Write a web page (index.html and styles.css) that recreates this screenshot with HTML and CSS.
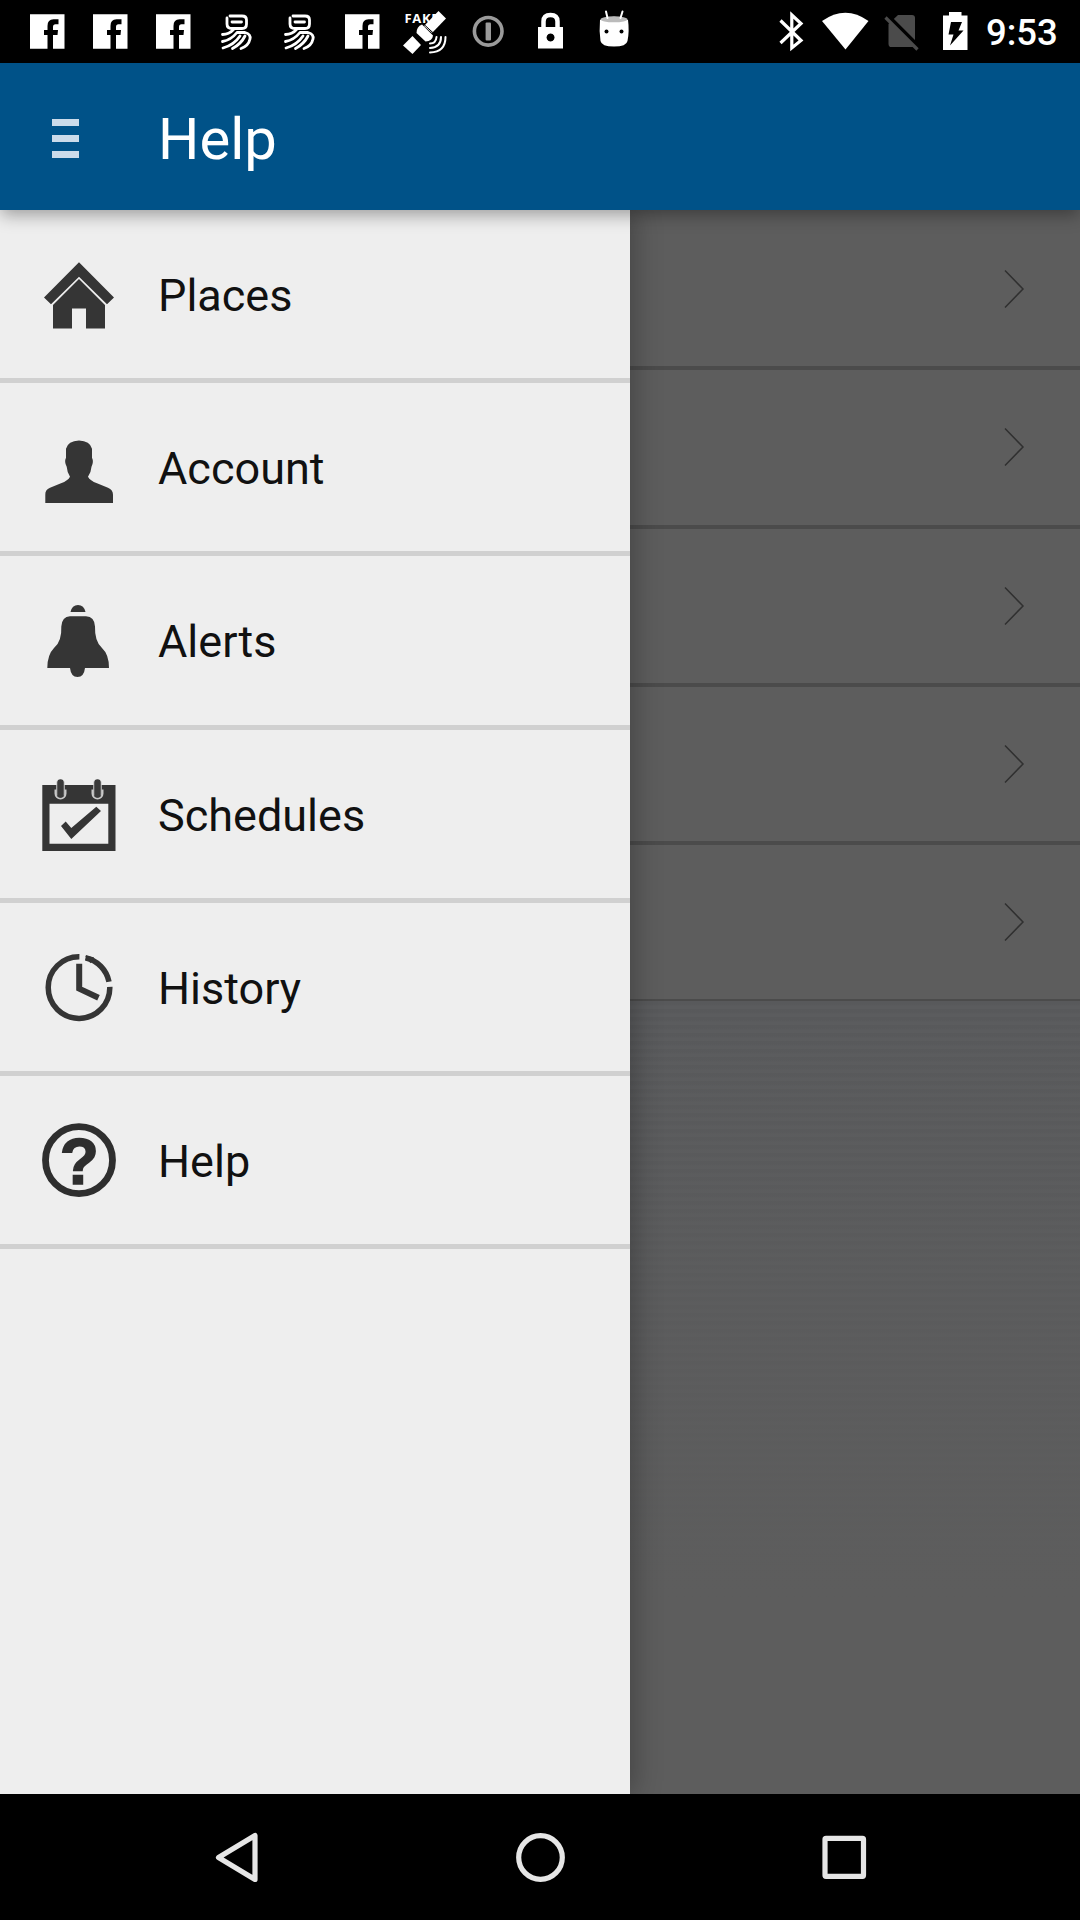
FILE: index.html
```html
<!DOCTYPE html>
<html lang="en">
<head>
<meta charset="utf-8">
<title>Help</title>
<link rel="stylesheet" href="styles.css">
</head>
<body>
<svg class="defs" width="0" height="0">
  <symbol id="fb" viewBox="0 0 63 63"><path class="w" d="M14 14.3H48.5V48.7H37V35H41.5L42 30H37V27Q37 24.300 39.500 24.300H42.500V19.300H37.500Q31.500 19.300 31.500 26V30H28V35H31.500V48.700H14Z"/></symbol>
  <symbol id="yi" viewBox="0 0 63 63"><g class="ws"><path d="M25 16H37Q41.500 16 41.500 20V24Q41.500 28.500 37 28.500H27Q22 28.500 22 24V18"/><path d="M27 22H36.500"/><path d="M17.500 34.500Q24 34.500 28.500 29.500M17.500 41.500Q26 40 32 32.500H40Q46 34 45 39Q43.500 46 36 48.500M18 48Q29 45 35 36M27.500 48.500Q36 44 40 36"/></g></symbol>
  <symbol id="chevron" viewBox="0 0 22 40"><path d="M2 1.500L20 20L2 38.500" fill="none" stroke="#303030" stroke-width="1.500"/></symbol>
</svg>

<header class="status">
  <div class="notifications">
    <svg><use href="#fb"/></svg>
    <svg><use href="#fb"/></svg>
    <svg><use href="#fb"/></svg>
    <svg><use href="#yi"/></svg>
    <svg><use href="#yi"/></svg>
    <svg><use href="#fb"/></svg>
    <svg viewBox="394 0 63 63">
      <text class="fake" x="404.500" y="22.800">FAKE</text>
      <path class="w" d="M438.500 11L446 18.500L432 33L424 26Z"/><path class="w" d="M412.500 36L421 45L412.500 54L403 45.500Z"/><path class="w" d="M422 24.500L433 35.500Q432.500 41 425.500 41.500L416.500 33Q416.500 26.500 422 24.500Z"/>
      <path d="M421.500 25L433.500 36" stroke="#000" stroke-width="1" transform="translate(2 -1)"/>
      <path class="ws thin" d="M430 43.500Q436 43.500 436.500 37M430 48Q441 47.500 441 37M430 52.500Q445.500 52 445.500 37"/>
    </svg>
    <svg viewBox="457 0 63 63"><circle cx="488.200" cy="31.300" r="13.800" fill="none" stroke="#9a9a9a" stroke-width="3.600"/><rect x="485.600" y="22.500" width="5.400" height="18" rx="1" fill="#9a9a9a"/></svg>
    <svg viewBox="520 0 63 63"><path d="M543.500 28V21.500Q543.500 15 550.500 15T557.500 21.500V28" fill="none" stroke="#fff" stroke-width="4.500"/><path class="w" fill-rule="evenodd" d="M538 27H563V48.500H538ZM550.500 33.500a4 4 0 1 0 .1 0Z"/></svg>
    <svg viewBox="583 0 63 63"><path class="w" d="M600 20Q599 31 600.500 41Q601.500 46.500 614 46.500T627.500 41Q629.500 31 628 20Q614 13.500 600 20Z"/><ellipse cx="614" cy="19.300" rx="13.500" ry="3" fill="#bbb"/><path class="ws thin" d="M607.500 18L606 11.500M620.500 18L622.500 11.500"/><circle cx="606.500" cy="31.500" r="2"/><circle cx="621.500" cy="31.500" r="2"/></svg>
  </div>
  <div class="system">
    <svg class="bt" viewBox="770 0 43 63"><path d="M780.500 20.500L801 40.500L791.800 48V15L801 23.500L780.500 43" fill="none" stroke="#fff" stroke-width="3.200"/></svg>
    <svg class="wifi" viewBox="813 0 64 63"><path class="w" d="M822 21Q845.500 4.500 868.500 21L845.500 49.500Z"/></svg>
    <svg class="sim" viewBox="877 0 48 63"><path fill="#4b4b4b" d="M898 15H912Q915 15 915 18V47H890Q888.500 46 888.500 44V24Z"/><path d="M888 16L919 47" stroke="#000" stroke-width="4"/><path d="M885.500 17.500L917.500 49.500" stroke="#4b4b4b" stroke-width="3.200"/></svg>
    <svg class="battery" viewBox="925 0 55 63"><path class="w" d="M943 15.500H949V12H961.500V15.500H967.500V50H943Z"/><path d="M951 22H962L958.500 30.500H963.500L950 45.500L953.500 34.500H948.500Z"/></svg>
    <span class="time">9:53</span>
  </div>
</header>

<div class="appbar">
  <div class="burger"><i></i><i></i><i></i></div>
  <h1>Help</h1>
</div>

<main class="content">
  <nav class="drawer">
    <a class="row"><svg viewBox="0 210 157 168.200"><path d="M79 262.300L114 297.500L107 304.300L79 276.800L51 304.300L44 297.500Z"/><path d="M79 279L105 305V328.500H86V308.500H72V328.500H53V305Z"/></svg><span>Places</span></a>
    <a class="row"><svg viewBox="0 383.200 157 168.200"><path d="M79 440.700Q90 441 92 449V458Q94 462 91.500 467Q91 473 88 477Q90 481 97 483.500L108 488Q113 490 113 495V503.300H45.300V495Q45 490 50 488L61 483.500Q68 481 70 477Q67 472 66.700 467Q64 462 66 458V449Q68 441 79 440.700Z"/></svg><span>Account</span></a>
    <a class="row"><svg viewBox="0 556.400 157 168.200"><path d="M70.500 612.300Q72 605.300 78 605.300T85.500 612.300Z"/><path d="M70 616.700H86Q94.500 617 95 627Q94.500 642 102 648.500Q109 655 109 668.300H85Q84 677.300 77.500 677.300T70 668.300H47.300Q47.500 655 54 648.500Q62 642 61.300 627Q62 617 70 616.700Z"/></svg><span>Alerts</span></a>
    <a class="row"><svg viewBox="0 729.600 157 168.200"><path fill-rule="evenodd" d="M42.300 784.700H115.500V850.500H42.300ZM49.500 803.300V843.300H108.300V803.300Z"/><path d="M55.500 789V793a5 5 0 0 0 10 0V789M92.500 789V793a5 5 0 0 0 10 0V789" fill="none" stroke="#c8c8c8" stroke-width="2"/><path d="M60.500 781V795M97.500 781V795" stroke="#ccc" stroke-width="8.500"/><path d="M60.500 782V794M97.500 782V794" stroke="#3a3a3a" stroke-width="6.500" stroke-linecap="round"/><path d="M61 825.500L65.700 821L71.300 827.700L96.300 806.300L101 810.700L71.300 838.700Z"/></svg><span>Schedules</span></a>
    <a class="row"><svg viewBox="0 902.800 157 168.200"><g fill="none" stroke="#353535"><path stroke-width="5.500" d="M109.800 986.700A30.800 30.800 0 1 1 79.400 956.600M85.500 957.500A31 31 0 0 1 109 981.500"/><path stroke-width="6" d="M79.200 963.500V988.500L98.500 997.500"/></g><path d="M85 955.500L94 957L90.500 963Z"/></svg><span>History</span></a>
    <a class="row"><svg viewBox="0 1076 157 168.200"><circle cx="79" cy="1160.200" r="33.500" fill="none" stroke="#2e2e2e" stroke-width="6.800"/><text class="question" x="79.300" y="1184">?</text></svg><span>Help</span></a>
  </nav>
  <section class="page">
    <ul class="topics">
      <li><svg><use href="#chevron"/></svg></li>
      <li><svg><use href="#chevron"/></svg></li>
      <li><svg><use href="#chevron"/></svg></li>
      <li><svg><use href="#chevron"/></svg></li>
      <li><svg><use href="#chevron"/></svg></li>
    </ul>
    <div class="backdrop"></div>
  </section>
</main>

<footer class="navbar">
  <svg viewBox="205 1826 63 63"><path d="M218.500 1857.500L255 1835.500V1879.500Z"/></svg>
  <svg viewBox="509 1826 63 63"><circle cx="540.500" cy="1857.500" r="21.800"/></svg>
  <svg viewBox="813 1826 63 63"><rect x="825" y="1838.300" width="38.500" height="38" rx="1"/></svg>
</footer>
</body>
</html>
```
FILE: styles.css
```css
* { box-sizing: border-box; }

body {
  margin: 0;
  width: 1080px;
  height: 1920px;
  display: flex;
  flex-direction: column;
  overflow: hidden;
  background: #000;
  font-family: Roboto, "Liberation Sans", sans-serif;
}

svg { display: block; flex: none; }
.defs { position: absolute; }
.w { fill: #fff; }
.ws { fill: none; stroke: #fff; stroke-width: 2.8; stroke-linecap: round; stroke-linejoin: round; }
.thin { stroke-width: 2; }

.status {
  height: 63px;
  flex: none;
  display: flex;
  justify-content: space-between;
  padding-left: 16px;
}
.notifications, .system { display: flex; }
.notifications svg { width: 63px; height: 63px; }
.system { width: 310px; }
.system svg { height: 63px; }
.bt { width: 43px; }
.wifi { width: 64px; }
.sim { width: 48px; }
.battery { width: 55px; }
.time {
  padding-left: 6px;
  color: #fff;
  font-size: 36.500px;
  font-weight: 500;
  line-height: 66px;
}
.fake { fill: #fff; font: bold 13px "Open Sans", sans-serif; letter-spacing: .7px; }

.appbar {
  height: 147px;
  flex: none;
  display: flex;
  align-items: center;
  background: #005288;
  box-shadow: 0 6px 16px -1px rgba(0, 0, 0, .34);
  z-index: 2;
}
.burger {
  width: 158px;
  padding: 3px 0 0 52px;
  display: flex;
  flex-direction: column;
  gap: 9px;
}
.burger i { width: 27px; height: 7px; background: #cbdbea; }
h1 {
  margin: 0;
  padding-top: 4px;
  color: #fff;
  font-size: 58px;
  font-weight: 400;
}

.content { height: 1584px; flex: none; display: flex; }
.drawer {
  width: 630px;
  flex: none;
  background: #eee;
  box-shadow: 4px 0 26px rgba(0, 0, 0, .28);
  z-index: 1;
}
.row {
  height: 173.200px;
  display: flex;
  align-items: center;
  border-bottom: 5px solid #d0d0d0;
  color: #111;
  font-size: 45px;
}
.row svg { width: 157px; height: 168.200px; fill: #353535; }
.row span { padding: 3px 0 0 1px; }
.question { font: bold 64px "Liberation Sans", sans-serif; text-anchor: middle; fill: #2e2e2e; stroke: #2e2e2e; stroke-width: 1.5; }

.page { flex: 1; display: flex; flex-direction: column; background: #5d5d5d; }
.topics { list-style: none; margin: 0; padding: 2px 0 0; }
.topics li {
  height: 158.250px;
  display: flex;
  align-items: center;
  justify-content: flex-end;
  padding-right: 55px;
  border-bottom: 4px solid #4b4b4b;
}
.topics li:last-child { height: 156px; border-bottom-width: 2px; }
.topics svg { width: 22px; height: 40px; }
.backdrop {
  flex: 1;
  background:
    linear-gradient(rgba(93, 93, 93, 0), #5d5d5d 600px),
    repeating-linear-gradient(#58595b 0 3px, #5b5c5e 5px 8px);
}

.navbar {
  height: 126px;
  flex: none;
  display: flex;
  justify-content: center;
  align-items: center;
  gap: 241px;
}
.navbar svg { width: 63px; height: 63px; fill: none; stroke: #e6e6e6; stroke-width: 5.200; stroke-linejoin: round; }
```
